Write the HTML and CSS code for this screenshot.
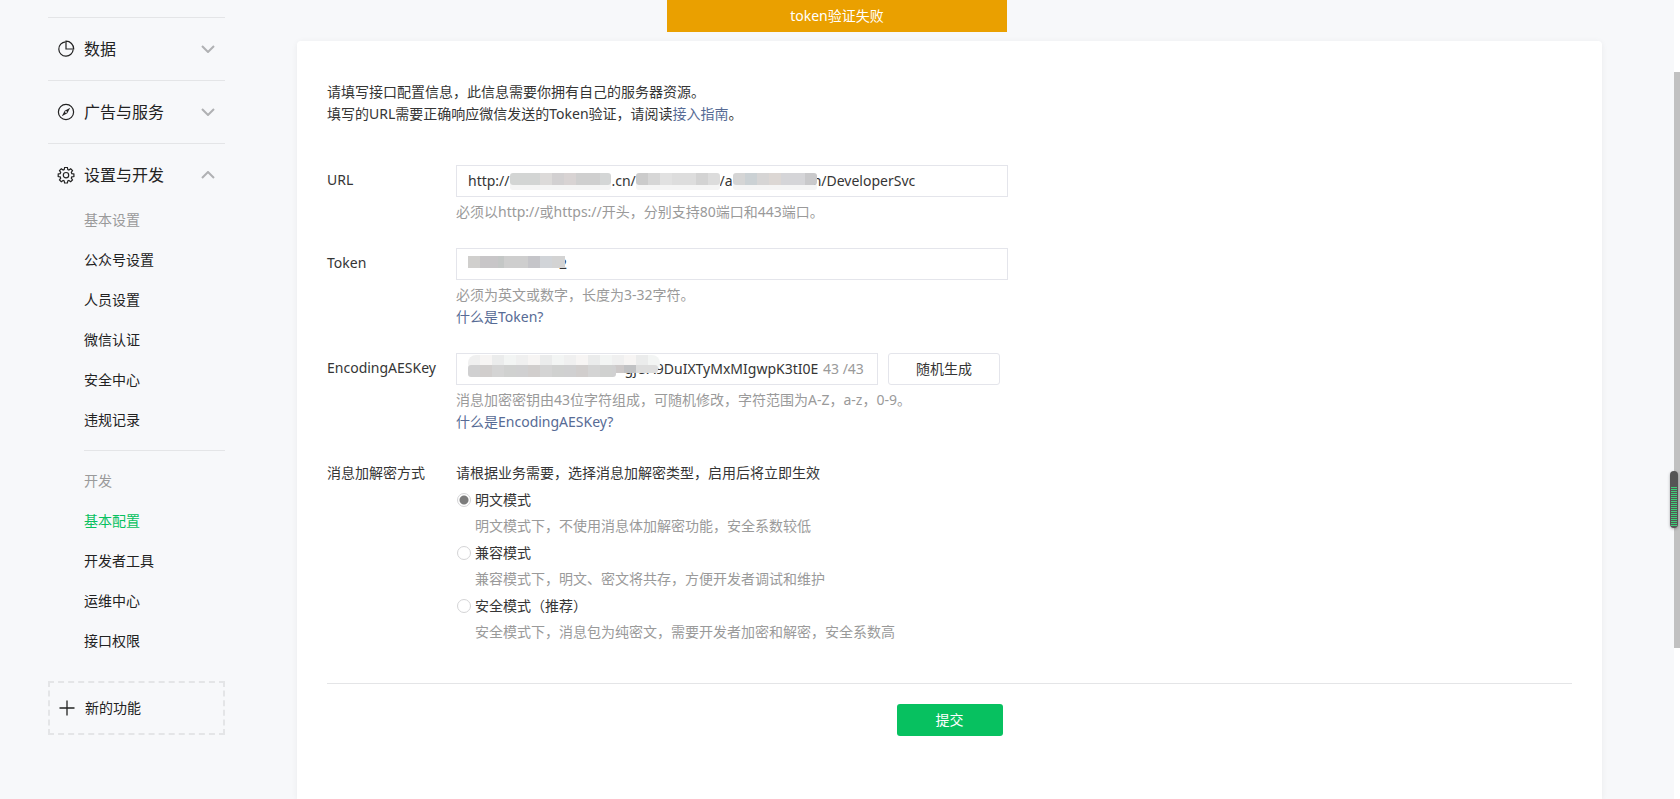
FILE: index.html
```html
<!DOCTYPE html>
<html lang="zh-CN">
<head>
<meta charset="utf-8">
<title>基本配置</title>
<link rel="stylesheet" href="styles.css">
</head>
<body>
<div class="toast" role="alert">token验证失败</div>
<div class="page">
  <nav class="sidebar">
    <button class="menu-title" type="button">
      <svg class="menu-icon" viewBox="0 0 18 18"><path d="M8.500 1.800A7.200 7.200 0 1 0 16.200 9.500"/><path d="M9 1.200V9H16.700A7.700 7.700 0 0 0 9 1.200Z"/></svg>
      <span class="menu-text">数据</span>
      <svg class="chevron" viewBox="0 0 14 8"><path d="M1 1L7 7L13 1"/></svg>
    </button>
    <button class="menu-title" type="button">
      <svg class="menu-icon" viewBox="0 0 18 18"><circle cx="9" cy="9" r="7.600"/><path class="solid" d="M13.200 4.800L10.300 10.300L4.800 13.200L7.700 7.700Z"/><circle class="hole" cx="9" cy="9" r="0.900"/></svg>
      <span class="menu-text">广告与服务</span>
      <svg class="chevron" viewBox="0 0 14 8"><path d="M1 1L7 7L13 1"/></svg>
    </button>
    <button class="menu-title menu-open" type="button">
      <svg class="menu-icon" viewBox="0 0 18 18"><path d="M7.600 1.500h2.800l.4 2 1.100.5 1.800-1.200 1.800 1.800-1.200 1.800.5 1.200 2.100.4v2.500l-2.100.4-.5 1.200 1.200 1.800-1.800 1.800-1.800-1.200-1.100.5-.4 2H7.600l-.4-2-1.100-.5-1.800 1.200-1.800-1.800 1.200-1.800-.5-1.200-2-.4V8l2-.4.5-1.200-1.200-1.800 1.800-1.800 1.800 1.200 1.100-.5z"/><circle cx="9" cy="9.200" r="2.700"/></svg>
      <span class="menu-text">设置与开发</span>
      <svg class="chevron" viewBox="0 0 14 8"><path d="M1 7L7 1L13 7"/></svg>
    </button>
    <ul class="submenu">
      <li class="sub-head">基本设置</li>
      <li><a href="#account">公众号设置</a></li>
      <li><a href="#people">人员设置</a></li>
      <li><a href="#verify">微信认证</a></li>
      <li><a href="#security">安全中心</a></li>
      <li><a href="#violation">违规记录</a></li>
    </ul>
    <ul class="submenu submenu-next">
      <li class="sub-head">开发</li>
      <li><a class="active" href="#config">基本配置</a></li>
      <li><a href="#tools">开发者工具</a></li>
      <li><a href="#ops">运维中心</a></li>
      <li><a href="#api">接口权限</a></li>
    </ul>
    <button class="add-feature" type="button">
      <svg class="plus" viewBox="0 0 16 16"><path d="M8 0.500V15.500M0.500 8H15.500"/></svg>
      <span>新的功能</span>
    </button>
  </nav>

  <main class="card">
    <p class="intro">请填写接口配置信息，此信息需要你拥有自己的服务器资源。<br>填写的URL需要正确响应微信发送的Token验证，请阅读<a href="#guide">接入指南</a>。</p>
    <form>
      <div class="row">
        <label class="label" for="url">URL</label>
        <div class="field">
          <div class="box">
            <input id="url" type="text" value="http://&nbsp;&nbsp;&nbsp;&nbsp;&nbsp;&nbsp;&nbsp;&nbsp;&nbsp;&nbsp;&nbsp;&nbsp;&nbsp;&nbsp;&nbsp;&nbsp;&nbsp;&nbsp;&nbsp;&nbsp;&nbsp;&nbsp;&nbsp;&nbsp;&nbsp;&nbsp;&nbsp;&nbsp;.cn/&nbsp;&nbsp;&nbsp;&nbsp;&nbsp;&nbsp;&nbsp;&nbsp;&nbsp;&nbsp;&nbsp;&nbsp;&nbsp;&nbsp;&nbsp;&nbsp;&nbsp;&nbsp;&nbsp;&nbsp;&nbsp;&nbsp;&nbsp;/a&nbsp;&nbsp;&nbsp;&nbsp;&nbsp;&nbsp;&nbsp;&nbsp;&nbsp;&nbsp;&nbsp;&nbsp;&nbsp;&nbsp;&nbsp;&nbsp;&nbsp;&nbsp;&nbsp;&nbsp;&nbsp;&nbsp;h/DeveloperSvc">
            <span class="mosaic mosaic-host"></span>
            <span class="mosaic mosaic-path"></span>
            <span class="mosaic mosaic-app"></span>
          </div>
          <p class="hint">必须以http://或https://开头，分别支持80端口和443端口。</p>
        </div>
      </div>
      <div class="row">
        <label class="label" for="token">Token</label>
        <div class="field">
          <div class="box">
            <input id="token" type="text" value="&nbsp;&nbsp;&nbsp;&nbsp;&nbsp;&nbsp;&nbsp;&nbsp;&nbsp;&nbsp;&nbsp;&nbsp;&nbsp;&nbsp;&nbsp;&nbsp;&nbsp;&nbsp;&nbsp;&nbsp;&nbsp;&nbsp;&nbsp;&nbsp;&nbsp;2">
            <span class="mosaic mosaic-token"></span>
          </div>
          <p class="hint">必须为英文或数字，长度为3-32字符。</p>
          <p class="hint"><a href="#token-help">什么是Token?</a></p>
        </div>
      </div>
      <div class="row">
        <label class="label" for="aes">EncodingAESKey</label>
        <div class="field">
          <div class="line">
            <div class="box box-counted">
              <input id="aes" type="text" value="&nbsp;&nbsp;&nbsp;&nbsp;&nbsp;&nbsp;&nbsp;&nbsp;&nbsp;&nbsp;&nbsp;&nbsp;&nbsp;&nbsp;&nbsp;&nbsp;&nbsp;&nbsp;&nbsp;&nbsp;&nbsp;&nbsp;&nbsp;&nbsp;&nbsp;&nbsp;&nbsp;&nbsp;&nbsp;&nbsp;&nbsp;&nbsp;&nbsp;&nbsp;&nbsp;&nbsp;&nbsp;&nbsp;&nbsp;&nbsp;&nbsp;&nbsp;&nbsp;gjUA9DuIXTyMxMIgwpK3tI0E">
              <span class="counter">43 /43</span>
              <span class="mosaic mosaic-key-top"></span>
              <span class="mosaic mosaic-key-end"></span>
              <span class="mosaic mosaic-key"></span>
            </div>
            <button class="btn" type="button">随机生成</button>
          </div>
          <p class="hint">消息加密密钥由43位字符组成，可随机修改，字符范围为A-Z，a-z，0-9。</p>
          <p class="hint"><a href="#aes-help">什么是EncodingAESKey?</a></p>
        </div>
      </div>
      <div class="row row-mode">
        <span class="label" id="mode-label">消息加解密方式</span>
        <div class="field" role="radiogroup" aria-labelledby="mode-label">
          <p>请根据业务需要，选择消息加解密类型，启用后将立即生效</p>
          <div class="option"><input type="radio" name="mode" id="plain" checked><label for="plain">明文模式</label><p>明文模式下，不使用消息体加解密功能，安全系数较低</p></div>
          <div class="option"><input type="radio" name="mode" id="compat"><label for="compat">兼容模式</label><p>兼容模式下，明文、密文将共存，方便开发者调试和维护</p></div>
          <div class="option"><input type="radio" name="mode" id="safe"><label for="safe">安全模式（推荐）</label><p>安全模式下，消息包为纯密文，需要开发者加密和解密，安全系数高</p></div>
        </div>
      </div>
      <div class="actions"><button class="btn btn-primary" type="submit">提交</button></div>
    </form>
  </main>
  <div class="scrollbar"><div class="thumb"></div></div>
</div>
<div class="meter"><div class="meter-bars"></div></div>
</body>
</html>
```

FILE: styles.css
```css
* { box-sizing: border-box; }
html, body { height: 100%; }
body {
  margin: 0;
  overflow: hidden;
  background: #f7f8fa;
  color: #353535;
  font: 14px/22px "Noto Sans", "Noto Sans CJK SC", sans-serif;
}
p, ul { margin: 0; padding: 0; }
ul { list-style: none; }
a { color: #576b95; text-decoration: none; }
button, input { font: inherit; color: inherit; }
button { cursor: pointer; }

.toast {
  position: absolute;
  top: 0;
  left: calc(50% - 173px);
  width: 340px;
  line-height: 32px;
  background: #eaa000;
  color: #fff;
  text-align: center;
}
.page { display: flex; height: 100%; }

.sidebar { flex: none; width: 177px; margin: 17px 72px 0 48px; color: #222; }
.menu-title {
  display: flex;
  align-items: center;
  width: 100%;
  padding: 19px 10px 19px 9px;
  border: 0;
  border-top: 1px solid #e4e5e7;
  background: none;
  font-size: 16px;
  line-height: 24px;
  text-align: left;
}
.menu-open { padding-bottom: 13px; }
.menu-icon { width: 18px; height: 18px; margin-right: 9px; fill: none; stroke: #222; stroke-width: 1.2; }
.menu-icon .solid { fill: #222; stroke: none; }
.menu-icon .hole { fill: #f7f8fa; stroke: none; }
.menu-text { flex: 1; }
.chevron { width: 14px; height: 8px; fill: none; stroke: #b0b1b3; stroke-width: 2; }
.submenu { margin-left: 36px; line-height: 40px; }
.submenu a { color: #222; }
.submenu .active { color: #07c160; }
.sub-head { color: #9a9a9a; }
.submenu-next { margin-top: 10px; padding-top: 10px; border-top: 1px solid #e4e5e7; }
.add-feature {
  display: flex;
  align-items: center;
  gap: 10px;
  width: 100%;
  height: 54px;
  margin-top: 20px;
  padding: 0 9px;
  border: 2px dashed #e4e5e7;
  background: none;
}
.plus { width: 16px; height: 16px; fill: none; stroke: #222; stroke-width: 1.3; }

.card {
  flex: 1;
  min-width: 0;
  margin: 41px 72px 0 0;
  padding: 40px 30px;
  border-radius: 4px 4px 0 0;
  background: #fff;
  box-shadow: 0 1px 6px rgba(0, 0, 0, 0.06);
}
.intro { margin-bottom: 40px; }
.row { display: flex; margin-bottom: 25px; }
.label { flex: none; width: 129px; padding-top: 4px; }
.field { width: 552px; }
.box { position: relative; display: flex; height: 32px; border: 1px solid #e4e5eb; background: #fff; }
.box input { flex: 1; min-width: 0; padding: 0; margin: 0 11px; border: 0; outline: 0; background: none; }
.line { display: flex; gap: 10px; }
.box-counted { width: 422px; }
.box-counted input { margin-right: 0; }
.counter { width: 45px; margin: 0 9px 0 5px; color: #9a9a9a; line-height: 30px; }
.hint { color: #9a9a9a; }
.box + .hint, .line + .hint { margin-top: 4px; }
.btn { width: 112px; height: 32px; padding: 0; border: 1px solid #e4e5eb; border-radius: 3px; background: #fff; }
.btn-primary { width: 106px; border: 0; background: #07c160; color: #fff; }

.row-mode { margin: 29px 0 40px; }
.row-mode .label { padding-top: 0; }
.option { display: grid; grid-template-columns: 14px 1fr; column-gap: 4px; row-gap: 4px; margin: 5px 0 0 1px; }
.option p { grid-column: 2; color: #9a9a9a; }
.option input {
  appearance: none;
  width: 14px;
  height: 14px;
  margin: 4px 0 0;
  border: 1px solid #d4d4d6;
  border-radius: 50%;
  background: #fff;
}
.option input:checked { background: radial-gradient(circle, #7c7c7c 0 4px, #fff 5px); }
.actions { display: flex; justify-content: center; padding-top: 20px; border-top: 1px solid #e4e5e7; }

/* Pixelated patches over private values */
.mosaic { position: absolute; top: 7px; height: 12px; border-radius: 3px; box-shadow: 0 5px 0 #f5f5f5; }
.mosaic-host { left: 53px; width: 101px; background: linear-gradient(90deg, #d3d5d4 30px, #dcdad9 30px 42px, #d2d0d1 42px 54px, #d8d3d3 54px 66px, #cfcfcf 66px 90px, #d4d6d6 90px); }
.mosaic-path { left: 179px; width: 84px; background: linear-gradient(90deg, #cbcbcb 12px, #d6d6d6 12px 24px, #e1e1e1 24px 36px, #dddddd 36px 60px, #d3d3d3 60px 72px, #dcdcdc 72px); }
.mosaic-app { left: 276px; width: 84px; background: linear-gradient(90deg, #d5d5d5 12px, #cbd1d4 12px 24px, #d6d5d5 24px 36px, #dcd7d4 36px 48px, #d5d5d8 48px 72px, #c9c9cb 72px); }
.mosaic-token { left: 11px; width: 97px; border-radius: 0; box-shadow: none; background: linear-gradient(90deg, #d0cfcd 12px, #c8c6c8 12px 30px, #c4c7c6 30px 36px, #cecece 36px 60px, #c5c5c9 60px 72px, #d1d4d8 72px 84px, #d3d3d3 84px); }
.mosaic-key-top { top: 1px; left: 11px; width: 192px; height: 17px; border-radius: 8px; box-shadow: none; background: repeating-linear-gradient(90deg, #f0f0f0 0 12px, #f7f5f4 12px 24px, #ebecec 24px 36px, #f3f5f4 36px 48px); }
.mosaic-key-end { top: 11px; left: 155px; width: 46px; height: 8px; box-shadow: none; background: linear-gradient(90deg, #cdc9c9 12px, #c1c2c4 12px 24px, #dddddd 24px); }
.mosaic-key { top: 11px; left: 11px; width: 148px; box-shadow: none; background: repeating-linear-gradient(90deg, #d0d0d1 0 12px, #d1cecd 12px 24px, #d4d4d4 24px 36px, #d0d1d0 36px 48px); }

.scrollbar { flex: none; width: 6px; padding-top: 72px; background: #fff; }
.thumb { height: 576px; background: #c1c1c1; }
.meter {
  position: absolute;
  top: 471px;
  right: 2px;
  width: 8px;
  height: 57px;
  padding: 16px 1px 2px;
  border-radius: 4px;
  background: #555;
  box-shadow: 0 1px 3px rgba(0, 0, 0, 0.3);
}
.meter-bars { height: 100%; background: repeating-linear-gradient(#3ed078 0 1px, #555 1px 2px); }
```
